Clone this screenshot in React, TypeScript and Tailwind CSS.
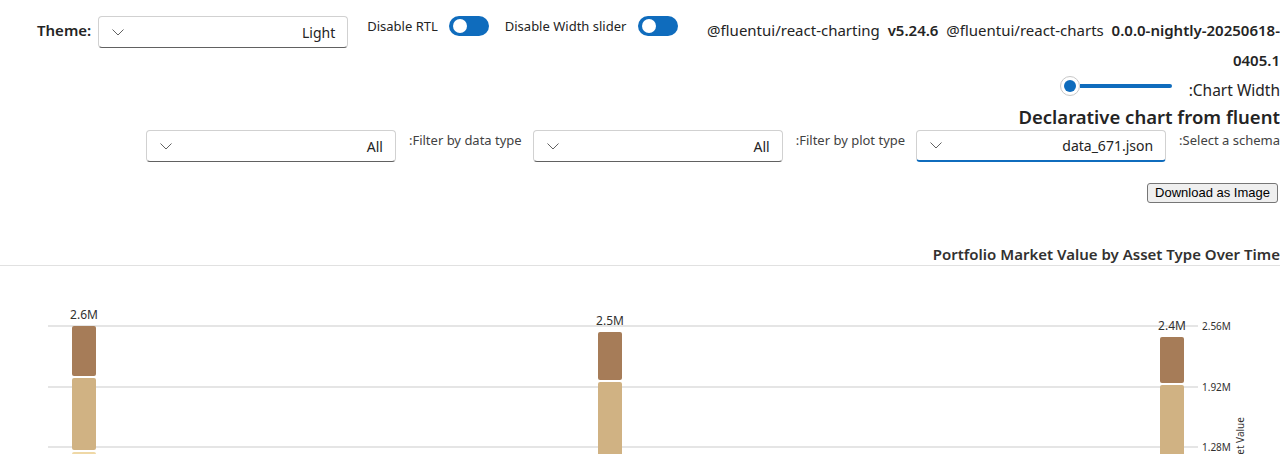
const font = { fontFamily: '"Segoe UI", "Noto Sans", sans-serif' }

function Chevron() {
  return (
    <svg width={12} height={7} viewBox="0 0 12 7" className="shrink-0">
      <path d="M0.5 0.5 L6 6 L11.5 0.5" fill="none" stroke="#616161" strokeWidth={1} />
    </svg>
  )
}

function Dropdown({ value, focused }: { value: string; focused?: boolean }) {
  return (
    <div
      className={
        'flex h-[32px] w-[250px] shrink-0 items-center justify-between rounded-[4px] border border-[#d1d1d1] bg-white pl-[13px] pr-[12px] ' +
        (focused ? 'border-b-2 border-b-[#0f6cbd]' : 'border-b-[#616161]')
      }
    >
      <Chevron />
      <span className="text-[14px] text-[#242424]">{value}</span>
    </div>
  )
}

function Toggle() {
  return (
    <div className="mt-[1px] flex h-[20px] w-[40px] shrink-0 items-center rounded-full bg-[#0f6cbd] pl-[4px]">
      <div className="h-[14px] w-[14px] rounded-full bg-white" />
    </div>
  )
}

const bars = [
  { x: 72, label: '2.6M', ly: 49, dark: [60, 50], tan: [112, 72], gold: 186 },
  { x: 598, label: '2.5M', ly: 55, dark: [66, 48], tan: [116, 80], gold: 0 },
  { x: 1160, label: '2.4M', ly: 60, dark: [71, 46], tan: [119, 80], gold: 0 },
]

function Chart() {
  const grid = [
    { y: 60, label: '2.56M' },
    { y: 121, label: '1.92M' },
    { y: 181, label: '1.28M' },
  ]
  return (
    <svg width={1280} height={188} className="block">
      {grid.map((g) => (
        <g key={g.y}>
          <line x1={48} x2={1198} y1={g.y} y2={g.y} stroke="#dcdcdc" strokeWidth={1.5} />
          <text x={1202} y={g.y + 4} fontSize={10} fill="#323130">
            {g.label}
          </text>
        </g>
      ))}
      {bars.map((b) => (
        <g key={b.x}>
          <rect x={b.x} y={b.dark[0]} width={24} height={b.dark[1]} rx={2} fill="#a67c58" />
          <rect x={b.x} y={b.tan[0]} width={24} height={b.tan[1]} rx={2} fill="#d0b283" />
          {b.gold > 0 && <rect x={b.x} y={b.gold} width={24} height={6} rx={2} fill="#efd8a6" />}
          <text x={b.x + 12} y={b.ly + 4} fontSize={12} textAnchor="middle" fill="#323130">
            {b.label}
          </text>
        </g>
      ))}
      <text
        x={1244}
        y={182}
        fontSize={10}
        textAnchor="middle"
        fill="#323130"
        transform="rotate(-90 1244 182)"
      >
        Market Value
      </text>
    </svg>
  )
}

export default function App() {
  return (
    <div className="h-[454px] w-[1280px] overflow-hidden bg-white text-[#242424]" style={font}>
      {/* top controls */}
      <div className="flex items-start pl-[37px] pt-[15px]">
        <span className="text-[15px] font-semibold leading-[30px]">Theme:</span>
        <div className="ml-[7px] mt-[1px]">
          <Dropdown value="Light" />
        </div>
        <span className="ml-[19px] mt-[1px] text-[13px] leading-[20px]">Disable RTL</span>
        <div className="ml-[11px]">
          <Toggle />
        </div>
        <span className="ml-[16px] mt-[1px] text-[13px] leading-[20px]">Disable Width slider</span>
        <div className="ml-[12px]">
          <Toggle />
        </div>
        <div className="ml-[17px] flex-1 text-right text-[15px] leading-[30px]" dir="rtl">
          <span dir="ltr">
            @fluentui/react-charting&nbsp; <b className="font-semibold">v5.24.6</b>&nbsp; @fluentui/react-charts&nbsp;{' '}
            <b className="font-semibold">0.0.0-nightly-20250618-0405.1</b>
          </span>
        </div>
      </div>

      {/* chart width slider */}
      <div className="flex items-start justify-end">
        <div className="mt-[1px] flex h-[20px] w-[112px] items-center">
          <div className="flex h-[20px] w-[20px] shrink-0 items-center justify-center rounded-full border border-[#c8c8c8] bg-white">
            <div className="h-[12px] w-[12px] rounded-full bg-[#0f6cbd]" />
          </div>
          <div className="h-[4px] flex-1 rounded-r-full bg-[#0f6cbd]" />
        </div>
        <span className="ml-[17px] text-[15.5px] leading-[30px]">:Chart Width</span>
      </div>

      <h2 className="text-right text-[18.5px] font-semibold leading-[24px]">Declarative chart from fluent</h2>

      {/* filters */}
      <div className="mt-[1px] flex items-start justify-end">
        <Dropdown value="All" />
        <span className="ml-[13px] mr-[11px] text-[13px] leading-[20px] text-[#424242]">:Filter by data type</span>
        <Dropdown value="All" />
        <span className="ml-[13px] mr-[11px] text-[13px] leading-[20px] text-[#424242]">:Filter by plot type</span>
        <Dropdown value="data_671.json" focused />
        <span className="ml-[13px] text-[13px] leading-[20px] text-[#424242]">:Select a schema</span>
      </div>

      <div className="mt-[21px] flex justify-end pr-[2px]">
        <button
          type="button"
          className="h-[20px] rounded-[3px] border border-[#767676] bg-[#efefef] px-[7px] text-[13px] leading-[18px] text-black"
          style={{ fontFamily: '"Liberation Sans", Arial, sans-serif' }}
        >
          Download as Image
        </button>
      </div>

      <div className="mt-[40px] border-b border-[#e1e1e1] text-right text-[15px] font-semibold leading-[22px] text-[#323130]">
        Portfolio Market Value by Asset Type Over Time
      </div>

      <Chart />
    </div>
  )
}
